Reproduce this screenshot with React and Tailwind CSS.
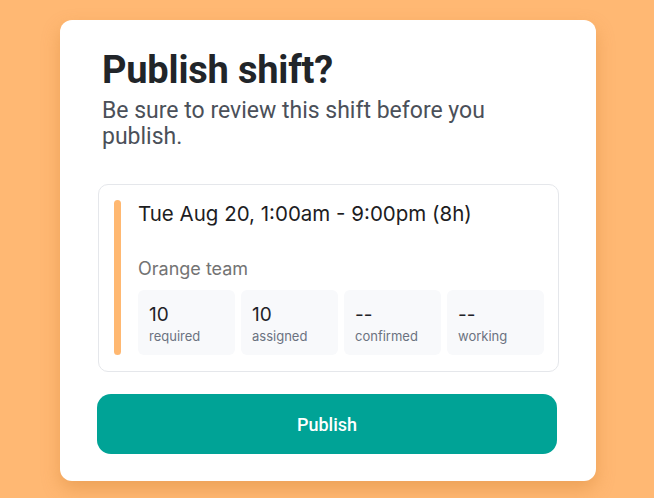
const stats = [
  { value: "10", label: "required" },
  { value: "10", label: "assigned" },
  { value: "--", label: "confirmed" },
  { value: "--", label: "working" },
]

function StatBox({ value, label }) {
  return (
    <div className="rounded-md bg-[#f8f9fb] pl-[11px] pt-[13px] pb-[11px]">
      <p className="text-[19px] leading-[24px] text-[#1f2328]">{value}</p>
      <p className="mt-px text-[13px] leading-[16px] text-[#6b7280]">{label}</p>
    </div>
  )
}

export default function App() {
  return (
    <div className="h-[498px] w-full overflow-hidden bg-[#ffb873] pt-5 pl-[60px] font-['Roboto',sans-serif]">
      <div className="w-[536px] rounded-xl bg-white px-[37px] pt-[28px] pb-[27px] shadow-[0_8px_18px_rgba(200,120,40,0.35)]">
        <div className="pl-[5px]">
          <h1 className="text-[38px] font-bold leading-[44px] tracking-[-0.2px] text-[#212529]">
            Publish shift?
          </h1>
          <p className="mt-[6px] w-[450px] text-[23px] leading-[25.5px] text-[#4b5059]">
            Be sure to review this shift before you publish.
          </p>
        </div>

        <div className="mt-[35px] ml-px flex gap-[17px] rounded-[10px] border border-[#e5e7eb] p-[15px] pr-[14px] pb-[16px] font-['Inter',sans-serif]">
          <div className="w-[7px] shrink-0 rounded-full bg-[#ffb871]" />
          <div className="flex-1">
            <p className="text-[20.5px] leading-[28px] text-[#1d1d1f]">
              Tue Aug 20, 1:00am - 9:00pm (8h)
            </p>
            <p className="mt-[29px] text-[18px] leading-[24px] text-[#737373]">
              Orange team
            </p>
            <div className="mt-[9px] grid grid-cols-4 gap-[6px]">
              {stats.map((s) => (
                <StatBox key={s.label} value={s.value} label={s.label} />
              ))}
            </div>
          </div>
        </div>

        <button className="mt-[22px] h-[60px] w-[460px] rounded-[14px] bg-[#00a396] text-[18px] font-medium text-white">
          Publish
        </button>
      </div>
    </div>
  )
}
